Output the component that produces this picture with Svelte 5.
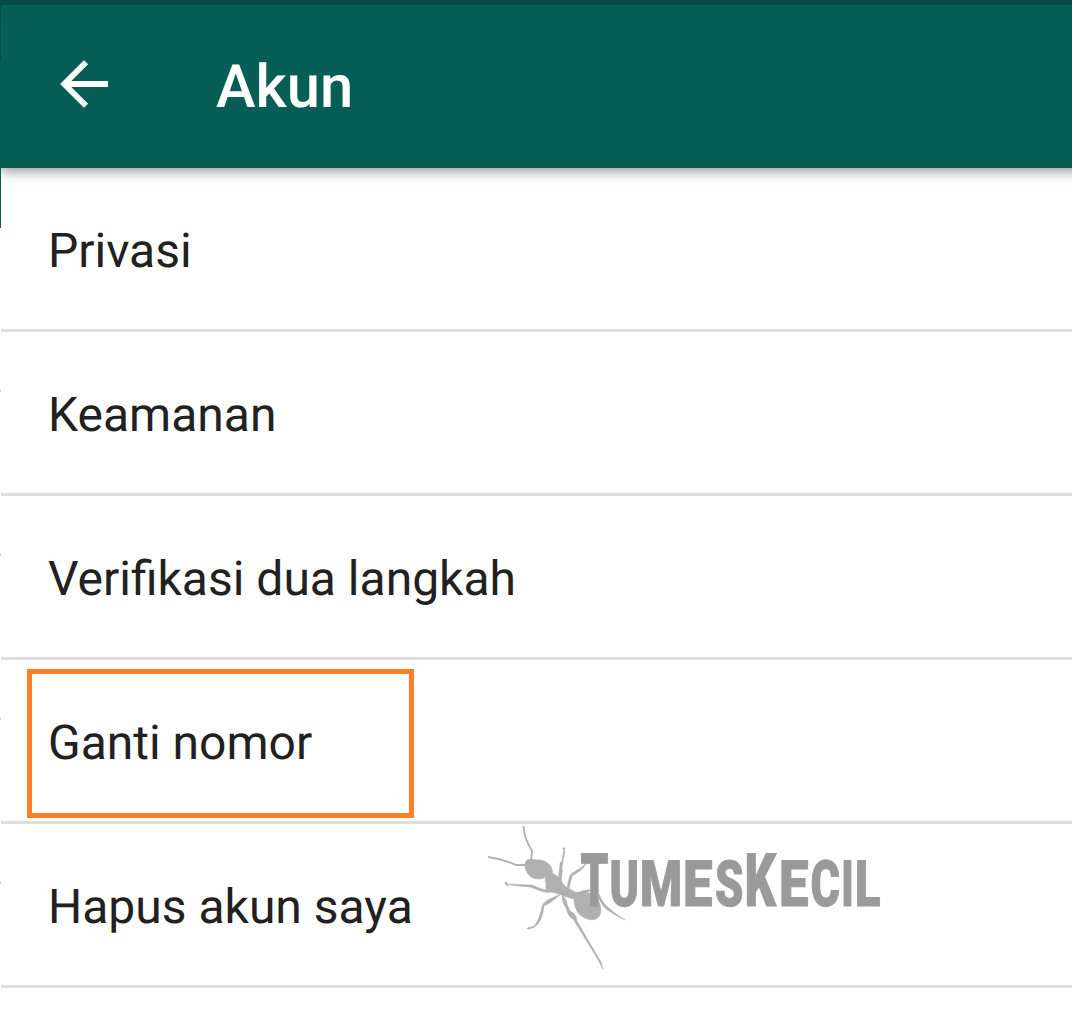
<script lang="ts">
  const items = [
    { label: 'Privasi' },
    { label: 'Keamanan' },
    { label: 'Verifikasi dua langkah' },
    { label: 'Ganti nomor', highlighted: true },
    { label: 'Hapus akun saya' }
  ];

  // condensed wordmark: start and advance width of each letter
  const letters = [
    { char: 'T', x: 100.5, width: 28, big: true },
    { char: 'U', x: 129.5, width: 29.5 },
    { char: 'M', x: 160, width: 42 },
    { char: 'E', x: 203, width: 29.5 },
    { char: 'S', x: 235, width: 28.5 },
    { char: 'K', x: 264.5, width: 31.5, big: true },
    { char: 'E', x: 299, width: 29.5 },
    { char: 'C', x: 330.5, width: 29.5 },
    { char: 'I', x: 361.2, width: 12.5 },
    { char: 'L', x: 375, width: 25.5 }
  ];

  // squeeze a letter horizontally to its width in the wordmark
  function fit(node: SVGTextElement, letter: { x: number; width: number }) {
    const scale = letter.width / node.getComputedTextLength();
    node.setAttribute('transform', `translate(${letter.x} 86) scale(${scale} 1)`);
  }
</script>

<div class="screen">
  <div class="status-bar"></div>
  <header class="toolbar">
    <button class="back" aria-label="Kembali">
      <svg viewBox="0 0 48 48" width="48" height="48">
        <path d="M26 2.200 4.200 24l21.800 21.800M5 24h43" />
      </svg>
    </button>
    <h1>Akun</h1>
  </header>

  <ul class="settings">
    {#each items as item (item.label)}
      <li class:highlighted={item.highlighted}>{item.label}</li>
    {/each}
  </ul>

  <div class="edge edge-top"></div>
  <div class="edge edge-bottom"></div>
  {#each items.slice(1) as item, i (item.label)}
    <div class="tick" style="top: {389 + i * 164}px"></div>
  {/each}

  <svg class="watermark" viewBox="0 0 410 160" width="410" height="160">
    <g class="ant">
      <path d="M46 41C49 38 53 40 60 40C67 41 73 46 72.500 53C76 56 80 56 82 62C84 67 89 68 95 72L105 74C110 71 117 75 120 84C123 94 119 99 112 100C101 99 94 91 94 79C89 78 84 76 79 74C73 73 71 71 69 71C65 70 66 67 66 63C65 61 65 59 66 57C61 60 53 60 49 55C45 51 44 45 46 41Z" />
      <path d="M82 75C85 78 87 81 87 84L90 91C95 93 97 98 97 101L108 120L121 142L123 149L117 138L103 115L93 99C89 97 88 94 86 88C83 84 82 79 82 75Z" />
      <path d="M81 74C75 79 69 84 64 86C63 94 61 101 57 105L53 108L47 108.500L54 106C58 102 61 93 62 86C65 80 72 78 81 74Z" />
      <path d="M72 72C64 74 57 69 50 67L38 66L32 65L27 64L37 64.500L52 65C59 68 65 71 72 70Z" />
      <path d="M79 61C78 53 80 48 80 43L82 41L84 29L85 31L83 41L82 48C83 53 81 57 81 62Z" />
      <path d="M87 69C88 61 89 57 91 54C97 50 102 48 107 42C103 50 97 53 92 56C91 62 89 66 89 70Z" />
      <path d="M96 73C102 71 108 69 112 70L98 77Z" />
      <path d="M119 74C123 83 126 86 130 89L136 94L145 100L137 96L129 91C124 88 120 82 118 76Z" />
      <path class="line" d="M51 41 52 31Q44 18 43.500 6M46 45H36Q23 39 8 37M28 66 25 62M83 29l2-1M48 108l2 1" />
    </g>
    <g class="wordmark">
      {#each letters as letter}
        <text class:big={letter.big} use:fit={letter}>{letter.char}</text>
      {/each}
    </g>
  </svg>
</div>

<style>
  :global(body) {
    margin: 0;
    background: #fefefe;
  }

  .screen {
    position: relative;
    height: 1020px;
    overflow: hidden;
    background: #fefefe;
    font-family: Roboto, sans-serif;
    text-rendering: geometricPrecision;
  }

  .status-bar {
    position: relative;
    z-index: 1;
    height: 5px;
    background: #054d44;
  }

  .toolbar {
    display: flex;
    align-items: center;
    gap: 108px;
    height: 163px;
    margin-right: -20px;
    padding-left: 60px;
    box-sizing: border-box;
    background: #075e54;
    box-shadow: 0 3px 12px rgba(0, 0, 0, 0.42);
  }

  .back {
    display: flex;
    margin-top: -5px;
    padding: 0;
    border: 0;
    background: none;
  }

  .back path {
    fill: none;
    stroke: #fff;
    stroke-width: 5.8;
  }

  h1 {
    margin: 0;
    color: #fff;
    font-size: 59.7px;
    font-weight: 500;
    line-height: 70px;
  }

  .settings {
    margin: 0 0 0 1px;
    padding: 0;
    list-style: none;
  }

  li {
    position: relative;
    height: 164px;
    box-sizing: border-box;
    padding-left: 47px;
    border-bottom: 3px solid #dedede;
    color: #212121;
    font-size: 48px;
    line-height: 166px;
  }

  .highlighted::after {
    content: '';
    position: absolute;
    top: 9px;
    left: 26px;
    width: 387px;
    height: 149px;
    box-sizing: border-box;
    border: 5px solid #ff7f27;
  }

  .edge {
    position: absolute;
    left: 0;
    width: 1px;
  }

  .edge-top {
    top: 5px;
    height: 55px;
    background: #054d44;
  }

  .edge-bottom {
    top: 168px;
    height: 60px;
    background: #075e54;
  }

  .tick {
    position: absolute;
    left: 0;
    width: 1px;
    height: 3px;
    background: #d8d8d8;
  }

  .watermark {
    position: absolute;
    top: 820px;
    left: 480px;
  }

  .ant {
    fill: #b0b0b0;
    stroke: #b0b0b0;
    stroke-width: 0.5;
  }

  .ant .line {
    fill: none;
    stroke-width: 1.8;
  }

  .wordmark {
    fill: #9a9a9a;
    stroke: #9a9a9a;
    stroke-width: 1;
    font-size: 64px;
    font-weight: 900;
  }

  .big {
    font-size: 74px;
  }
</style>
